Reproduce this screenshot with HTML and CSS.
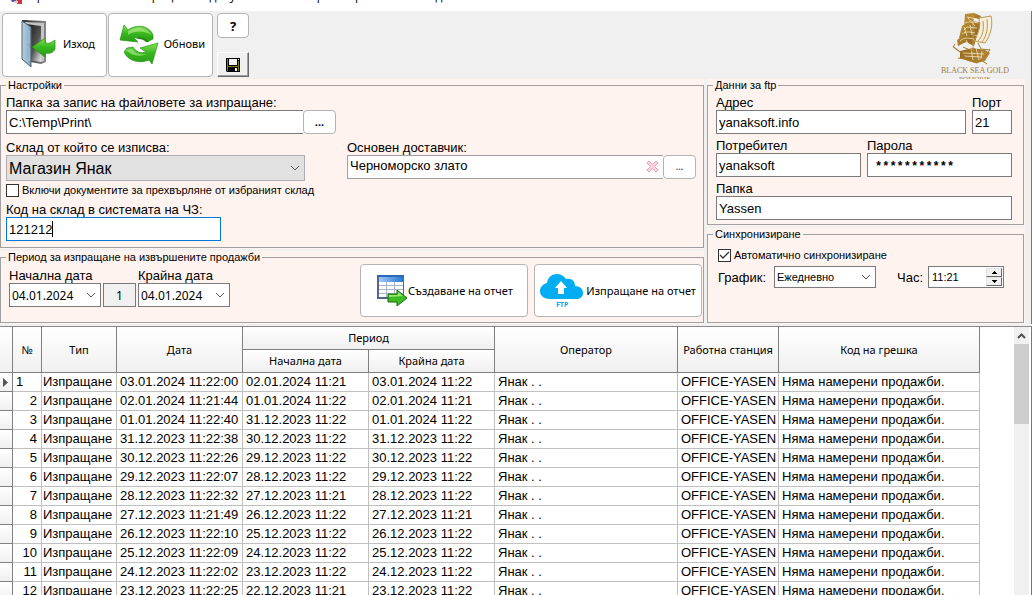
FILE: index.html
```html
<!DOCTYPE html>
<html lang="bg">
<head>
<meta charset="utf-8">
<title>Изпращане на отчети</title>
<link rel="stylesheet" href="styles.css">
</head>
<body>
<header class="titlebar">
  <svg class="app-icon" width="16" height="16" viewBox="0 0 16 16"><path fill="#4a5fa8" d="M1 8h7v6H4z"/><path fill="#c8383e" d="M8 9h6v7H9z"/><path fill="#e9c9cc" d="M6 13h4v2H6z"/></svg>
  <span>Приключване на операции по документи към Черноморско злато за дата</span>
</header>

<div class="toolbar">
  <button class="tool" type="button">
    <svg width="48" height="50" viewBox="0 0 48 50">
      <defs>
        <linearGradient id="frame" x1="0" x2="1"><stop offset="0" stop-color="#222"/><stop offset="1" stop-color="#888"/></linearGradient>
        <linearGradient id="room" x1="0" y1="0" x2="1" y2="1"><stop offset="0" stop-color="#111"/><stop offset=".6" stop-color="#555"/><stop offset="1" stop-color="#eee"/></linearGradient>
        <linearGradient id="door" x1="0" x2="1"><stop offset="0" stop-color="#bdd5e6"/><stop offset="1" stop-color="#7d9fb9"/></linearGradient>
        <linearGradient id="green" x1="0" y1="0" x2="0" y2="1"><stop offset="0" stop-color="#8be05a"/><stop offset=".5" stop-color="#35b71d"/><stop offset="1" stop-color="#2c9a17"/></linearGradient>
      </defs>
      <path fill="url(#frame)" d="M10 1l24 1v41l-5 2-16-3z"/>
      <path fill="#c4c4c4" d="M13 3l19 1v38l-3 1V7H13z"/>
      <path fill="url(#room)" d="M14 5l15 2v36l-13-2z"/>
      <path fill="url(#door)" stroke="#51626f" d="M10 2l9 6v40l-9-8z"/>
      <path fill="none" stroke="#a9c3d5" d="M12 8l5 4v12l-5-3zM12 26l5 3v13l-5-4z"/>
      <path fill="url(#green)" stroke="#238a12" stroke-width=".7" d="M20 28l13-9v5c5 1 7-1 10-3v9c-2 4-5 5-10 4v4z"/>
    </svg>
    <span>Изход</span>
  </button>
  <button class="tool" type="button">
    <svg width="42" height="44" viewBox="0 0 42 44">
      <path fill="url(#green)" stroke="#259515" stroke-width=".7" d="M6 3l4 5c8-6 21-5 25 5l0 4-6 3c-3-5-8-6-13-4l4 4-18-2z"/>
      <path fill="#258b15" d="M17 16c5-2 10-1 14 4l-3 0c-2-2-4-3-8-3z"/>
      <path fill="url(#green)" stroke="#259515" stroke-width=".7" d="M34 42l-3-4C21 42 10 39 6 30l3-4 6-1c3 5 8 7 13 5l-6-4 18-5z"/>
      <path fill="#b5ef8e" opacity=".6" d="M10 9c8-5 18-4 24 4-8-4-16-5-24 0zM8 28l6-1c4 5 9 6 15 5-8 3-15 2-21-4z"/>
    </svg>
    <span>Обнови</span>
  </button>
  <div class="tool-stack">
    <button class="help" type="button">?</button>
    <button class="save" type="button" aria-label="Запис">
      <svg width="14" height="14" viewBox="0 0 14 14"><path fill="#000" d="M0 0h14v14H1l-1-1z"/><path fill="#808000" d="M1 1h1v7h10V3h1v10h-1V9H2v4H1z"/><path fill="#f4f4f4" d="M3 1h8v6H3zM9 10h2v3H9zM12 1h1v1h-1z"/></svg>
    </button>
  </div>
  <svg class="logo" width="74" height="66" viewBox="0 0 74 66" role="img" aria-label="Black Sea Gold Pomorie">
    <defs><linearGradient id="gold" x1="0" y1="0" x2="1" y2="1"><stop offset="0" stop-color="#caa03c"/><stop offset=".5" stop-color="#9a6b20"/><stop offset="1" stop-color="#b78d3d"/></linearGradient></defs>
    <path fill="url(#gold)" d="M27 1l9-1 7 3-2 3-5-1-1 3 9 2-3 5-15-1zM24 13l6-4 13 3-4 10-18 3zM19 27l7-5 13 1-3 10-8-4-8 4zM22 38l13-3 12 2 5 3-5 8-8 2-17-5z"/>
    <path fill="#f6eedb" d="M42 5l11-1c2 9 0 19-6 26l-10-1c4-8 6-15 5-24z"/>
    <path fill="none" stroke="#b99a50" d="M41 5l12-2c2 9 0 19-6 27l-11-2c5-8 6-14 5-23zM45 8c1 8 0 15-5 20M49 6c1 9 0 16-5 23M35 0v42"/>
    <path fill="none" stroke="#f3e7c6" stroke-width=".8" d="M29 4l10 2M27 10c5-2 8-1 13 0M26 17l3-3 10 1M24 21c4-3 8-2 13-1M22 28c4-4 8-3 14-2M26 14l3 9M32 12l2 10M25 40l21 1M26 43l18 1M30 5l7 8M28 27l5 8M38 35l3 12M33 36l2 11M44 38l-1 8"/>
    <path fill="none" stroke="#a87c2d" d="M17 31l-2 3 9 6 5 7 10 3 10-8 3-6M20 45l6 1 10 3 6-1M40 30l3 6 9 1M16 34l7 6M43 47l6 4M25 34l12 5"/>
    <text class="logo-name" x="3" y="60" fill="#a07a38">BLACK SEA GOLD</text>
    <text class="logo-place" x="21" y="68" fill="#a8823f">POMORIE</text>
  </svg>
</div>

<main class="panels">
  <div class="column">
    <div class="panel">
      <fieldset>
        <legend>Настройки</legend>
        <div class="settings">
          <div class="field">
            <label for="folder">Папка за запис на файловете за изпращане:</label>
            <div class="with-button path"><input id="folder" type="text" value="C:\Temp\Print\"><button class="browse" type="button">...</button></div>
          </div>
          <div class="stores">
            <div class="field">
              <label for="store">Склад от който се изписва:</label>
              <select id="store" class="big"><option>Магазин Янак</option></select>
            </div>
            <div class="field">
              <label for="supplier">Основен доставчик:</label>
              <div class="with-button supplier">
                <input id="supplier" type="text" value="Черноморско злато">
                <button class="clear" type="button" aria-label="Изчисти"><svg width="13" height="13" viewBox="0 0 13 13"><path fill="#ffd3e2" stroke="#ee9dbd" d="M1 3l2-2 3.500 3.500L10 1l2 2-3.500 3.500L12 10l-2 2-3.500-3.500L3 12l-2-2 3.500-3.500z"/></svg></button>
                <button class="browse" type="button">...</button>
              </div>
            </div>
          </div>
          <label class="check include"><input type="checkbox"><span>Включи документите за прехвърляне от избраният склад</span></label>
          <div class="field code">
            <label for="code">Код на склад в системата на ЧЗ:</label>
            <div class="caret-box"><input id="code" class="active" type="text" value="121212"><i class="caret"></i></div>
          </div>
        </div>
      </fieldset>
    </div>
    <div class="panel">
      <fieldset>
        <legend>Период за изпращане на извършените продажби</legend>
        <div class="period">
          <div class="dates">
            <div class="field"><label for="from">Начална дата</label><select id="from" class="date"><option>04.01.2024</option></select></div>
            <button class="day" type="button">1</button>
            <div class="field"><label for="to">Крайна дата</label><select id="to" class="date"><option>04.01.2024</option></select></div>
          </div>
          <div class="actions">
            <button class="action" type="button">
              <svg width="32" height="34" viewBox="0 0 32 34">
                <defs><linearGradient id="head" x1="0" x2="1"><stop offset="0" stop-color="#9ccaf5"/><stop offset="1" stop-color="#2878d0"/></linearGradient></defs>
                <path fill="#53648e" d="M1 1h27v24H1z"/><path fill="#fff" d="M3 8h24v15H3z"/><path fill="url(#head)" d="M3 3h24v5H3z"/><path fill="#2c68bd" d="M1 1h27v2H1z"/>
                <path stroke="#a9b4cf" d="M3 11.500h24M3 15.500h24M3 19.500h24M10.500 8v15M18.500 8v15"/>
                <path fill="#3dbd22" stroke="#176b0c" d="M12 20h9v-4l10 8-10 8v-4h-9z"/><path fill="#98e865" d="M13 21h9v-3l5 4-14 1z"/>
              </svg>
              <span>Създаване на отчет</span>
            </button>
            <button class="action send" type="button">
              <svg width="44" height="36" viewBox="0 0 44 36">
                <path fill="#00adf2" d="M10 26C3 26 0 22 0 18s3-7 7-8C8 4 12 1 17 1c4 0 7 2 9 5 6-1 9 2 9 7 5 0 8 3 8 7s-3 6-7 6z"/>
                <path fill="#fff" d="M21 8l6 7h-3v6h-6v-6h-3z"/>
                <text class="ftp" x="16" y="34" fill="#00adf2">FTP</text>
              </svg>
              <span>Изпращане на отчет</span>
            </button>
          </div>
        </div>
      </fieldset>
    </div>
  </div>

  <div class="column side">
    <div class="panel">
      <fieldset>
        <legend>Данни за ftp</legend>
        <div class="ftp-form">
          <div class="row address">
            <div class="field"><label for="host">Адрес</label><input id="host" type="text" value="yanaksoft.info"></div>
            <div class="field"><label for="port">Порт</label><input id="port" type="text" value="21"></div>
          </div>
          <div class="row login">
            <div class="field"><label for="user">Потребител</label><input id="user" type="text" value="yanaksoft"></div>
            <div class="field"><label for="pass">Парола</label><input id="pass" class="secret" type="text" value="***********"></div>
          </div>
          <div class="field"><label for="dir">Папка</label><input id="dir" type="text" value="Yassen"></div>
        </div>
      </fieldset>
    </div>
    <div class="panel grow">
      <fieldset>
        <legend>Синхронизиране</legend>
        <div class="sync">
          <label class="check"><input type="checkbox" checked><span>Автоматично синхронизиране</span></label>
          <div class="schedule">
            <label class="plan-label" for="plan">График:</label>
            <select id="plan" class="small"><option>Ежедневно</option></select>
            <label class="hour-label" for="hour">Час:</label>
            <div class="spin">
              <input id="hour" type="text" value="11:21">
              <div class="spin-buttons">
                <button type="button" aria-label="Нагоре"><svg width="5" height="3" viewBox="0 0 5 3"><path d="M2 0h1v1h1v1h1v1H0V2h1V1h1z"/></svg></button>
                <button type="button" aria-label="Надолу"><svg width="5" height="3" viewBox="0 0 5 3"><path d="M0 0h5v1H4v1H3v1H2V2H1V1H0z"/></svg></button>
              </div>
            </div>
          </div>
        </div>
      </fieldset>
    </div>
  </div>
</main>

<section class="grid">
  <div class="grid-view">
    <table>
      <colgroup><col class="c-mark"><col class="c-no"><col class="c-type"><col class="c-date"><col class="c-date"><col class="c-date"><col class="c-user"><col class="c-pc"><col class="c-err"></colgroup>
      <thead>
        <tr><th rowspan="2"></th><th rowspan="2">№</th><th rowspan="2">Тип</th><th rowspan="2">Дата</th><th colspan="2">Период</th><th rowspan="2">Оператор</th><th rowspan="2">Работна станция</th><th rowspan="2">Код на грешка</th></tr>
        <tr><th>Начална дата</th><th>Крайна дата</th></tr>
      </thead>
      <tbody>
        <tr class="current"><td><svg width="5" height="9" viewBox="0 0 5 9"><path fill="#555" d="M0 0l5 4.500L0 9z"/></svg></td><td>1</td><td>Изпращане</td><td>03.01.2024 11:22:00</td><td>02.01.2024 11:21</td><td>03.01.2024 11:22</td><td>Янак . .</td><td>OFFICE-YASEN</td><td>Няма намерени продажби.</td></tr>
        <tr><td></td><td>2</td><td>Изпращане</td><td>02.01.2024 11:21:44</td><td>01.01.2024 11:22</td><td>02.01.2024 11:21</td><td>Янак . .</td><td>OFFICE-YASEN</td><td>Няма намерени продажби.</td></tr>
        <tr><td></td><td>3</td><td>Изпращане</td><td>01.01.2024 11:22:40</td><td>31.12.2023 11:22</td><td>01.01.2024 11:22</td><td>Янак . .</td><td>OFFICE-YASEN</td><td>Няма намерени продажби.</td></tr>
        <tr><td></td><td>4</td><td>Изпращане</td><td>31.12.2023 11:22:38</td><td>30.12.2023 11:22</td><td>31.12.2023 11:22</td><td>Янак . .</td><td>OFFICE-YASEN</td><td>Няма намерени продажби.</td></tr>
        <tr><td></td><td>5</td><td>Изпращане</td><td>30.12.2023 11:22:26</td><td>29.12.2023 11:22</td><td>30.12.2023 11:22</td><td>Янак . .</td><td>OFFICE-YASEN</td><td>Няма намерени продажби.</td></tr>
        <tr><td></td><td>6</td><td>Изпращане</td><td>29.12.2023 11:22:07</td><td>28.12.2023 11:22</td><td>29.12.2023 11:22</td><td>Янак . .</td><td>OFFICE-YASEN</td><td>Няма намерени продажби.</td></tr>
        <tr><td></td><td>7</td><td>Изпращане</td><td>28.12.2023 11:22:32</td><td>27.12.2023 11:21</td><td>28.12.2023 11:22</td><td>Янак . .</td><td>OFFICE-YASEN</td><td>Няма намерени продажби.</td></tr>
        <tr><td></td><td>8</td><td>Изпращане</td><td>27.12.2023 11:21:49</td><td>26.12.2023 11:22</td><td>27.12.2023 11:21</td><td>Янак . .</td><td>OFFICE-YASEN</td><td>Няма намерени продажби.</td></tr>
        <tr><td></td><td>9</td><td>Изпращане</td><td>26.12.2023 11:22:10</td><td>25.12.2023 11:22</td><td>26.12.2023 11:22</td><td>Янак . .</td><td>OFFICE-YASEN</td><td>Няма намерени продажби.</td></tr>
        <tr><td></td><td>10</td><td>Изпращане</td><td>25.12.2023 11:22:09</td><td>24.12.2023 11:22</td><td>25.12.2023 11:22</td><td>Янак . .</td><td>OFFICE-YASEN</td><td>Няма намерени продажби.</td></tr>
        <tr><td></td><td>11</td><td>Изпращане</td><td>24.12.2023 11:22:02</td><td>23.12.2023 11:22</td><td>24.12.2023 11:22</td><td>Янак . .</td><td>OFFICE-YASEN</td><td>Няма намерени продажби.</td></tr>
        <tr><td></td><td>12</td><td>Изпращане</td><td>23.12.2023 11:22:25</td><td>22.12.2023 11:21</td><td>23.12.2023 11:22</td><td>Янак . .</td><td>OFFICE-YASEN</td><td>Няма намерени продажби.</td></tr>
      </tbody>
    </table>
  </div>
  <div class="scrollbar">
    <button type="button" aria-label="Нагоре"><svg width="9" height="6" viewBox="0 0 9 6"><path fill="none" stroke="#505050" stroke-width="2" d="M1 5l3.500-3.500L8 5"/></svg></button>
    <div class="thumb"></div>
  </div>
</section>
</body>
</html>
```
FILE: styles.css
```css
* { box-sizing: border-box; }

body {
  margin: 0;
  height: 100vh;
  overflow: hidden;
  display: flex;
  flex-direction: column;
  background: #f0f0f0;
  color: #000;
  font: 13px/15px "Liberation Sans", Arial, sans-serif;
}

button, input, select { font: inherit; color: inherit; margin: 0; border-radius: 0; }
button { padding: 0; background: #fff; border: 1px solid #b4b4b4; border-radius: 4px; }
svg { display: block; flex: none; }

/* title bar */
.titlebar {
  flex: none;
  height: 11px;
  overflow: hidden;
  display: flex;
  align-items: flex-end;
  gap: 4px;
  padding: 0 8px 7px;
  background: #fff;
  font: 12px/16px "Open Sans", sans-serif;
  white-space: nowrap;
}

/* toolbar */
.toolbar {
  flex: none;
  height: 68px;
  overflow: hidden;
  display: flex;
  align-items: flex-start;
  padding: 2px 19px 0 2px;
  gap: 1px;
  border-right: 1px solid #777;
  font: 11px/14px "Noto Sans", Tahoma, sans-serif;
}
.tool {
  width: 105px;
  height: 64px;
  display: flex;
  align-items: center;
  justify-content: space-between;
  padding: 0 7px 2px 9px;
}
.tool:first-child { padding: 0 11px 2px 9px; }
.tool-stack { display: flex; flex-direction: column; gap: 14px; margin-left: 3px; }
.help { width: 32px; height: 25px; font: bold 13px/14px "Noto Sans", sans-serif; }
.save {
  width: 32px;
  height: 25px;
  display: grid;
  place-items: center;
  background: #f0f0f0;
  border: 1px solid;
  border-color: #fff #696969 #696969 #fff;
  border-radius: 0;
  box-shadow: inset -1px -1px #a0a0a0;
}
.logo { margin-left: auto; }
.logo-name { font: 8px "Liberation Serif", serif; }
.logo-place { font: 7px "Liberation Serif", serif; }

/* panels */
.panels {
  flex: none;
  display: grid;
  grid-template-columns: minmax(0, 1fr) 318px;
  gap: 3px;
  padding-right: 6px;
  border-right: 1px solid #777;
}
.column { display: flex; flex-direction: column; gap: 2px; min-width: 0; }
.panel { background: #fff3ef; padding: 0 0 1px; }
.side .panel { padding-right: 1px; }
.grow { flex: 1; display: flex; }
.grow fieldset { flex: 1; }
fieldset { margin: 0; padding: 0; border: 1px solid #a0a0a0; min-width: 0; }
legend { margin-left: 5px; padding: 0 2px; font-size: 11px; line-height: 13px; }

.field { display: flex; flex-direction: column; min-width: 0; }
.field > label { white-space: nowrap; }
input[type="text"], select {
  width: 100%;
  height: 24px;
  padding: 0 2px;
  background-color: #fff;
  border: 1px solid #7a7a7a;
  outline: 0;
}
select {
  appearance: none;
  background-image: url("data:image/svg+xml,%3Csvg xmlns='http://www.w3.org/2000/svg' width='10' height='6'%3E%3Cpath d='M1 1l4 4 4-4' fill='none' stroke='%23555'/%3E%3C/svg%3E");
  background-repeat: no-repeat;
  background-position: right 4px center;
}

.settings { display: flex; flex-direction: column; padding: 3px 5px 6px; }
.with-button { display: flex; position: relative; }
.with-button input { flex: 1; min-width: 0; border-right: 0; }
.browse { width: 33px; height: 24px; font: bold 11px/14px "Noto Sans", sans-serif; }
.path { width: 330px; }
.stores { display: grid; grid-template-columns: 299px 349px; gap: 42px; margin-top: 6px; }
.big { height: 26px; font-size: 16px; background-color: #e1e1e1; border-color: #adadad; }
.supplier input { border-color: #a0a0a0; padding-bottom: 3px; }
.supplier .browse { color: #555; font-size: 9px; }
.clear { position: absolute; right: 37px; top: 5px; border: 0; background: none; }
.check { display: flex; align-items: center; gap: 3px; font-size: 11px; white-space: nowrap; }
.check input {
  appearance: none;
  width: 13px;
  height: 13px;
  background: #fff;
  border: 1px solid #333;
}
.check input:checked {
  background: #fff url("data:image/svg+xml,%3Csvg xmlns='http://www.w3.org/2000/svg' width='11' height='11'%3E%3Cpath d='M1 5l3 3 6-6' fill='none' stroke='%23333' stroke-width='1.3'/%3E%3C/svg%3E");
}
.include { margin: 2px 0 4px; }
.code { width: 215px; }
.caret-box { position: relative; }
.active[type="text"] { border-color: #0078d7; }
.caret { position: absolute; left: 46px; top: 4px; width: 1px; height: 16px; background: #000; }

.period { display: flex; justify-content: space-between; padding: 0 1px 5px 8px; }
.dates { display: flex; align-items: flex-end; gap: 2px; padding-bottom: 10px; }
.date { width: 92px; font: 12px/15px "Noto Sans", Tahoma, sans-serif; }
.day { width: 33px; height: 24px; background: #f0f0f0; border-color: #7a7a7a; border-radius: 0; font: 12px/15px "Noto Sans", Tahoma, sans-serif; }
.actions { display: flex; gap: 6px; }
.action {
  width: 168px;
  height: 53px;
  display: flex;
  align-items: center;
  justify-content: space-between;
  padding: 0 15px;
  font: 11px/14px "Noto Sans", Tahoma, sans-serif;
  white-space: nowrap;
}
.send { padding: 0 5px; }
.ftp { font: bold 7px "Noto Sans", sans-serif; }

.ftp-form { display: flex; flex-direction: column; gap: 4px; padding: 3px 11px 4px 8px; }
.row { display: grid; gap: 6px; }
.address { grid-template-columns: minmax(0, 1fr) 40px; }
.login { grid-template-columns: 1fr 1fr; }
.secret[type="text"] { padding: 4px 7px 0; font: bold 12px/15px "Liberation Mono", monospace; }

.sync { display: flex; flex-direction: column; gap: 3px; padding: 7px 19px 0 10px; }
.schedule { display: flex; align-items: center; }
.plan-label { width: 56px; }
.small { width: 102px; height: 22px; font-size: 11px; }
.hour-label { margin-left: auto; margin-right: 5px; }
.spin { display: flex; width: 76px; height: 22px; background: #fff; border: 1px solid #7a7a7a; padding: 1px; }
.spin input[type="text"] { flex: 1; min-width: 0; height: 18px; border: 0; font-size: 11px; }
.spin-buttons { display: grid; grid-template-rows: 1fr 1fr; width: 16px; }
.spin-buttons button {
  display: grid;
  place-items: center;
  background: #f0f0f0;
  border-color: #e3e3e3 #696969 #696969 #e3e3e3;
  border-radius: 0;
}

/* report grid */
.grid {
  flex: 1;
  min-height: 0;
  display: flex;
  margin: 2px 0 0;
  padding-right: 2px;
  border-top: 1px solid #8a8a8a;
  border-right: 1px solid #777;
  background: #fff;
}
.grid-view { flex: 1; min-width: 0; overflow: hidden; }
table { width: 980px; table-layout: fixed; border-collapse: separate; border-spacing: 0; }
.c-mark { width: 13px; }
.c-no { width: 29px; }
.c-type { width: 75px; }
.c-date { width: 126px; }
.c-user { width: 183px; }
.c-pc { width: 101px; }
.c-err { width: 201px; }
th {
  height: 23px;
  padding: 0;
  border: solid #808080;
  border-width: 0 1px 1px 0;
  background: linear-gradient(#fff, #f0f0f0);
  font: 11px/14px "Noto Sans", Tahoma, sans-serif;
  white-space: nowrap;
}
td {
  height: 19px;
  padding: 0 0 0 3px;
  border: solid #c0c0c0;
  border-width: 0 1px 1px 0;
  line-height: 18px;
  white-space: nowrap;
  overflow: hidden;
}
td:first-child { border-color: #808080; background: linear-gradient(#fff, #f0f0f0); }
td:nth-child(2) { text-align: right; padding-right: 4px; }
td:nth-child(3) { padding-left: 1px; }
.current td:nth-child(2) { text-align: left; }
.scrollbar { width: 15px; background: #f0f0f0; }
.scrollbar button { display: grid; place-items: center; width: 15px; height: 17px; background: none; border: 0; }
.thumb { height: 80px; background: #cdcdcd; }
```
